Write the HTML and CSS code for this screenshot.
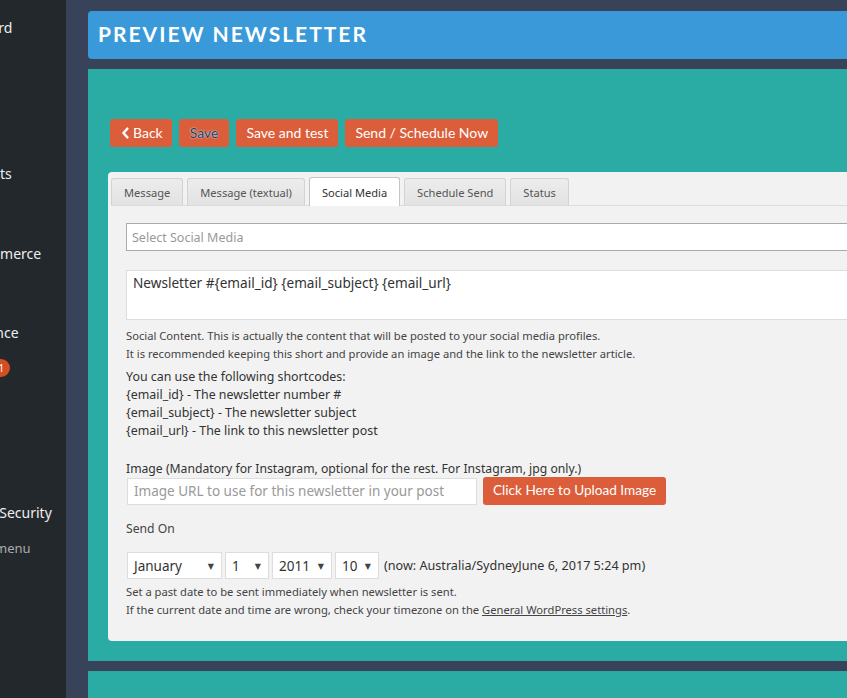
FILE: index.html
```html
<!DOCTYPE html>
<html lang="en">
<head>
<meta charset="utf-8">
<title>Preview Newsletter</title>
<link rel="stylesheet" href="styles.css">
</head>
<body>
<div class="wp">
  <aside class="sidebar">
    <ul class="menu">
      <li class="item">Dashboard</li>
      <li class="item">Posts</li>
      <li class="item">Media</li>
      <li class="item">Pages</li>
      <li class="sep s6"></li>
      <li class="item">Comments</li>
      <li class="item">Forms</li>
      <li class="sep s10"></li>
      <li class="item">WooCommerce</li>
      <li class="item">Products</li>
      <li class="sep s9"></li>
      <li class="item">Appearance</li>
      <li class="item">Plugins <span class="badge">1</span></li>
      <li class="item">Users</li>
      <li class="item">Tools</li>
      <li class="item">Settings</li>
      <li class="sep s5"></li>
      <li class="item">iThemes Security</li>
      <li class="item collapse">Collapse menu</li>
    </ul>
  </aside>
  <main class="main">
    <div class="page-head"><h1>Preview Newsletter</h1></div>
    <section class="panel">
      <div class="actions">
        <a class="btn btn-back"><svg class="chev" viewBox="0 0 10 14" width="8" height="12"><path d="M8 1.5 L3 7 L8 12.5" fill="none" stroke="#fff" stroke-width="3" stroke-linecap="round" stroke-linejoin="round"/></svg>Back</a>
        <a class="btn btn-save">Save</a>
        <a class="btn">Save and test</a>
        <a class="btn">Send / Schedule Now</a>
      </div>
      <div class="card">
        <ul class="tabs">
          <li class="tab">Message</li>
          <li class="tab">Message (textual)</li>
          <li class="tab active">Social Media</li>
          <li class="tab">Schedule Send</li>
          <li class="tab">Status</li>
        </ul>
        <div class="tab-body">
          <div class="multi-select">Select Social Media</div>
          <div class="textarea">Newsletter #{email_id} {email_subject} {email_url}</div>
          <p class="help">Social Content. This is actually the content that will be posted to your social media profiles.<br>It is recommended keeping this short and provide an image and the link to the newsletter article.</p>
          <p class="codes">You can use the following shortcodes:<br>{email_id} - The newsletter number #<br>{email_subject} - The newsletter subject<br>{email_url} - The link to this newsletter post</p>
          <p class="label label-image">Image (Mandatory for Instagram, optional for the rest. For Instagram, jpg only.)</p>
          <div class="upload-row">
            <div class="text-input">Image URL to use for this newsletter in your post</div>
            <a class="btn btn-upload">Click Here to Upload Image</a>
          </div>
          <p class="label label-send">Send On</p>
          <div class="date-row">
            <div class="sel sel-month"><span>January</span><span class="arrow">&#9660;</span></div>
            <div class="sel sel-day"><span>1</span><span class="arrow">&#9660;</span></div>
            <div class="sel sel-year"><span>2011</span><span class="arrow">&#9660;</span></div>
            <div class="sel sel-hour"><span>10</span><span class="arrow">&#9660;</span></div>
            <span class="now">(now: Australia/SydneyJune 6, 2017 5:24 pm)</span>
          </div>
          <p class="help help-date">Set a past date to be sent immediately when newsletter is sent.<br>If the current date and time are wrong, check your timezone on the <a class="link">General WordPress settings</a>.</p>
        </div>
      </div>
    </section>
    <section class="panel panel-next"></section>
  </main>
</div>
</body>
</html>
```

FILE: styles.css
```css
html, body {
  margin: 0;
  padding: 0;
  height: 100%;
  overflow: hidden;
}
body {
  background: #384359;
  font-family: "Noto Sans", "DejaVu Sans", sans-serif;
  color: #333;
}
.wp {
  display: flex;
  height: 698px;
}
.sidebar {
  flex: none;
  width: 66px;
  background: #23282d;
  overflow: hidden;
}
.menu {
  list-style: none;
  margin: 0 0 0 -60px;
  padding: 10px 0 0;
  width: 200px;
}
.item {
  height: 35px;
  display: flex;
  align-items: center;
  white-space: nowrap;
  color: #eee;
  font-size: 14px;
}
.item.collapse {
  color: #aaa;
  font-size: 13px;
}
.sep.s5 { height: 5px; }
.sep.s6 { height: 6px; }
.sep.s9 { height: 9px; }
.sep.s10 { height: 10px; }
.badge {
  display: inline-flex;
  align-items: center;
  justify-content: center;
  width: 18px;
  height: 18px;
  border-radius: 9px;
  background: #d54e21;
  color: #fff;
  font-size: 10px;
  margin-left: 4px;
}
.main {
  flex: none;
  width: 1000px;
  padding: 11px 0 0 22px;
}
.page-head {
  height: 48px;
  box-sizing: border-box;
  background: #3a9ad9;
  border-radius: 4px 0 0 4px;
  display: flex;
  align-items: center;
  padding: 0 0 3px 10px;
}
.page-head h1 {
  margin: 0;
  color: #fff;
  font-family: "Lato", sans-serif;
  font-weight: 700;
  font-size: 21px;
  letter-spacing: 2px;
  text-transform: uppercase;
}
.panel {
  margin-top: 10px;
  background: #2aaca4;
  padding: 50px 0 20px 20px;
}
.panel-next {
  height: 40px;
  padding: 0;
}
.actions {
  display: flex;
  gap: 7px;
  margin-left: 2px;
}
.btn {
  display: inline-flex;
  align-items: center;
  height: 28px;
  padding: 0 10px 2px;
  background: #db5d3a;
  color: #fff;
  border-radius: 3px;
  font-family: "Lato", sans-serif;
  font-size: 14px;
  box-sizing: border-box;
}
.btn-back { padding: 0 9px 2px 11px; }
.chev { margin-right: 4px; margin-top: 1px; }
.btn-save {
  padding: 0 11px 2px;
  color: #2c3b52;
  text-shadow: 0 0 1px #dbe9f7, 0 0 2px #c2d8ee;
}
.card {
  margin-top: 25px;
  background: #f2f2f2;
  border-radius: 4px 0 0 4px;
  padding: 6px 0 22px 3px;
}
.tabs {
  list-style: none;
  margin: 0;
  padding: 0;
  display: flex;
  gap: 4px;
  border-bottom: 1px solid #dcdcdc;
}
.tab {
  height: 27px;
  box-sizing: border-box;
  padding: 0 12px;
  display: flex;
  align-items: center;
  font-size: 11.1px;
  color: #555;
  border: 1px solid #d3d3d3;
  border-bottom: none;
  border-radius: 3px 3px 0 0;
  background: linear-gradient(#ececec, #e3e3e3);
}
.tab.active {
  background: #fff;
  border-color: #c5c5c5;
  color: #333;
  height: 29px;
  margin-bottom: -1px;
  margin-top: -1px;
}
.tab-body {
  padding: 17px 0 0 15px;
}
.multi-select {
  height: 28px;
  box-sizing: border-box;
  border: 1px solid #aaa;
  background: #fff;
  color: #999;
  font-size: 12.5px;
  padding: 0 5px;
  display: flex;
  align-items: center;
}
.textarea {
  margin-top: 19px;
  height: 50px;
  box-sizing: border-box;
  border: 1px solid #ddd;
  background: #fff;
  font-size: 13.6px;
  color: #333;
  padding: 2px 6px;
  line-height: 20px;
}
.help {
  margin: 7px 0 0;
  font-size: 11.2px;
  line-height: 18px;
  color: #444;
}
.codes {
  margin: 5px 0 0;
  font-size: 12.4px;
  line-height: 18px;
  color: #333;
}
.label {
  font-size: 12.2px;
  line-height: 18px;
  color: #333;
}
.label-image { margin: 20px 0 0; }
.upload-row {
  display: flex;
  align-items: center;
  margin-top: -1px;
}
.text-input {
  margin-left: 1px;
  width: 350px;
  height: 27px;
  box-sizing: border-box;
  border: 1px solid #ddd;
  background: #fff;
  color: #999;
  font-size: 13.5px;
  padding: 0 6px;
  display: flex;
  align-items: center;
}
.btn-upload {
  margin-left: 6px;
  height: 28px;
  padding: 0 10px 2px;
  font-size: 13.6px;
}
.label-send {
  margin: 15px 0 0;
  color: #444;
}
.date-row {
  display: flex;
  align-items: center;
  gap: 3px;
  margin-top: 14px;
  margin-left: 1px;
}
.sel {
  height: 27px;
  box-sizing: border-box;
  border: 1px solid #ddd;
  background: #fff;
  display: flex;
  align-items: center;
  justify-content: space-between;
  padding: 0 7px 0 6px;
  font-size: 13.5px;
  color: #333;
}
.arrow {
  font-size: 8px;
  color: #444;
}
.sel-month { width: 95px; }
.sel-day { width: 44px; }
.sel-year { width: 60px; }
.sel-hour { width: 44px; }
.now {
  margin-left: 2px;
  font-size: 12.6px;
  color: #333;
}
.help-date {
  margin-top: 4px;
}
.link {
  color: #444;
  text-decoration: underline;
}
```
